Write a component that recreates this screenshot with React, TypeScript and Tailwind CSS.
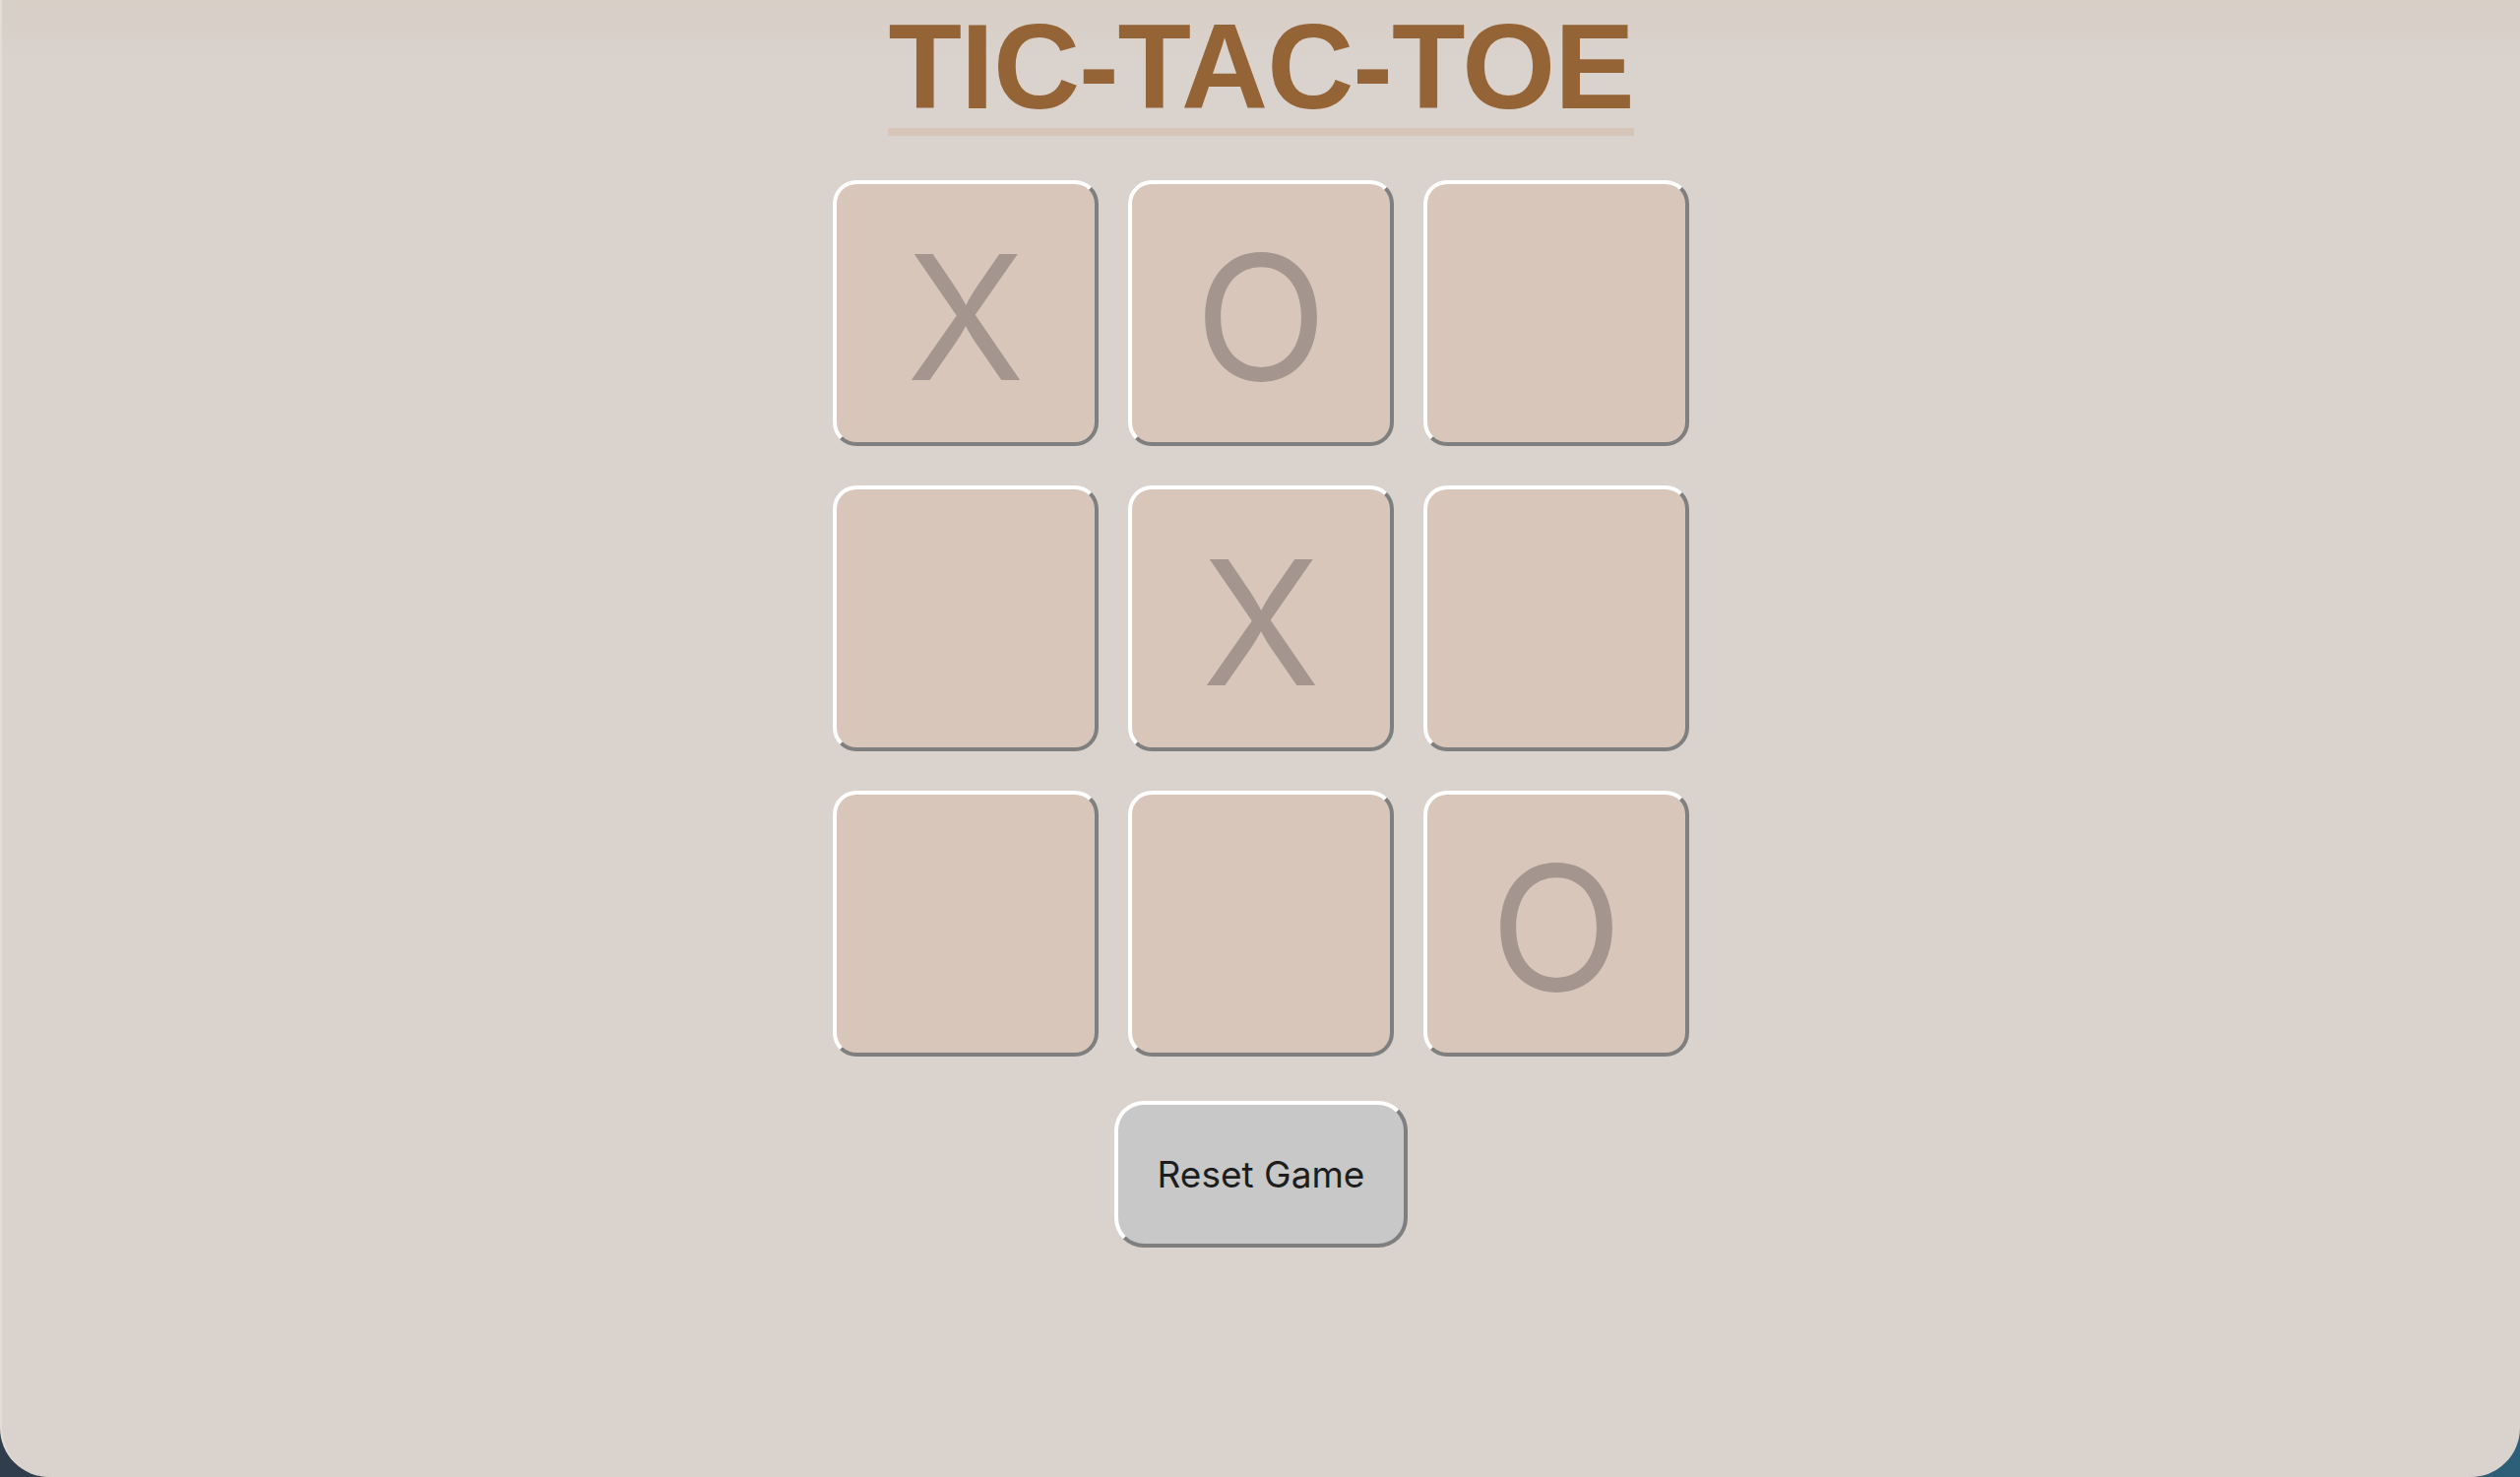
import React from "react";

const board: string[] = ["X", "O", "", "", "X", "", "", "", "O"];

function Cell({ v }: { v: string }) {
  return (
    <div className="w-[270px] h-[270px] box-border rounded-[24px] border-[4px] border-t-white border-l-white border-b-[#7f7f7f] border-r-[#7f7f7f] bg-[#d8c6ba] flex items-center justify-center pt-[8px]">
      <span className="text-[176px] leading-none text-[#a4968e] [font-family:Inter,'Liberation_Sans',sans-serif] font-normal">
        {v}
      </span>
    </div>
  );
}

export default function App() {
  return (
    <div className="w-[2560px] h-[1500px] bg-gradient-to-r from-[#2f3d4d] via-[#1f2a36] to-[#2c5f78] overflow-hidden">
      <div className="relative w-full h-full bg-[#dad2cc] rounded-b-[50px] border-l-[2px] border-l-[#e3ddd8] flex flex-col items-center">
        <div className="absolute left-0 top-0 w-full h-[60px] bg-gradient-to-b from-[#d7cec6] to-[#dad2cc00] pointer-events-none" />
        <h1 className="relative m-0 pt-[7px] pb-[1px] border-b-[8px] border-b-[#d7c5b9] whitespace-nowrap text-[122px] leading-[122px] tracking-[-1px] font-bold text-[#946436] [font-family:'Liberation_Sans',Arial,sans-serif]">
          TIC-TAC-TOE
        </h1>
        <div className="relative mt-[45px] grid grid-cols-[270px_270px_270px] gap-x-[30px] gap-y-[40px]">
          {board.map((v, i) => (
            <Cell key={i} v={v} />
          ))}
        </div>
        <button className="relative mt-[45px] w-[298px] h-[149px] box-border rounded-[30px] border-[4px] border-t-white border-l-white border-b-[#7f7f7f] border-r-[#7f7f7f] bg-[#c8c8c8] text-[#1d1d1d] text-[37px] [font-family:Inter,'Liberation_Sans',sans-serif] flex items-center justify-center">
          Reset Game
        </button>
      </div>
    </div>
  );
}
